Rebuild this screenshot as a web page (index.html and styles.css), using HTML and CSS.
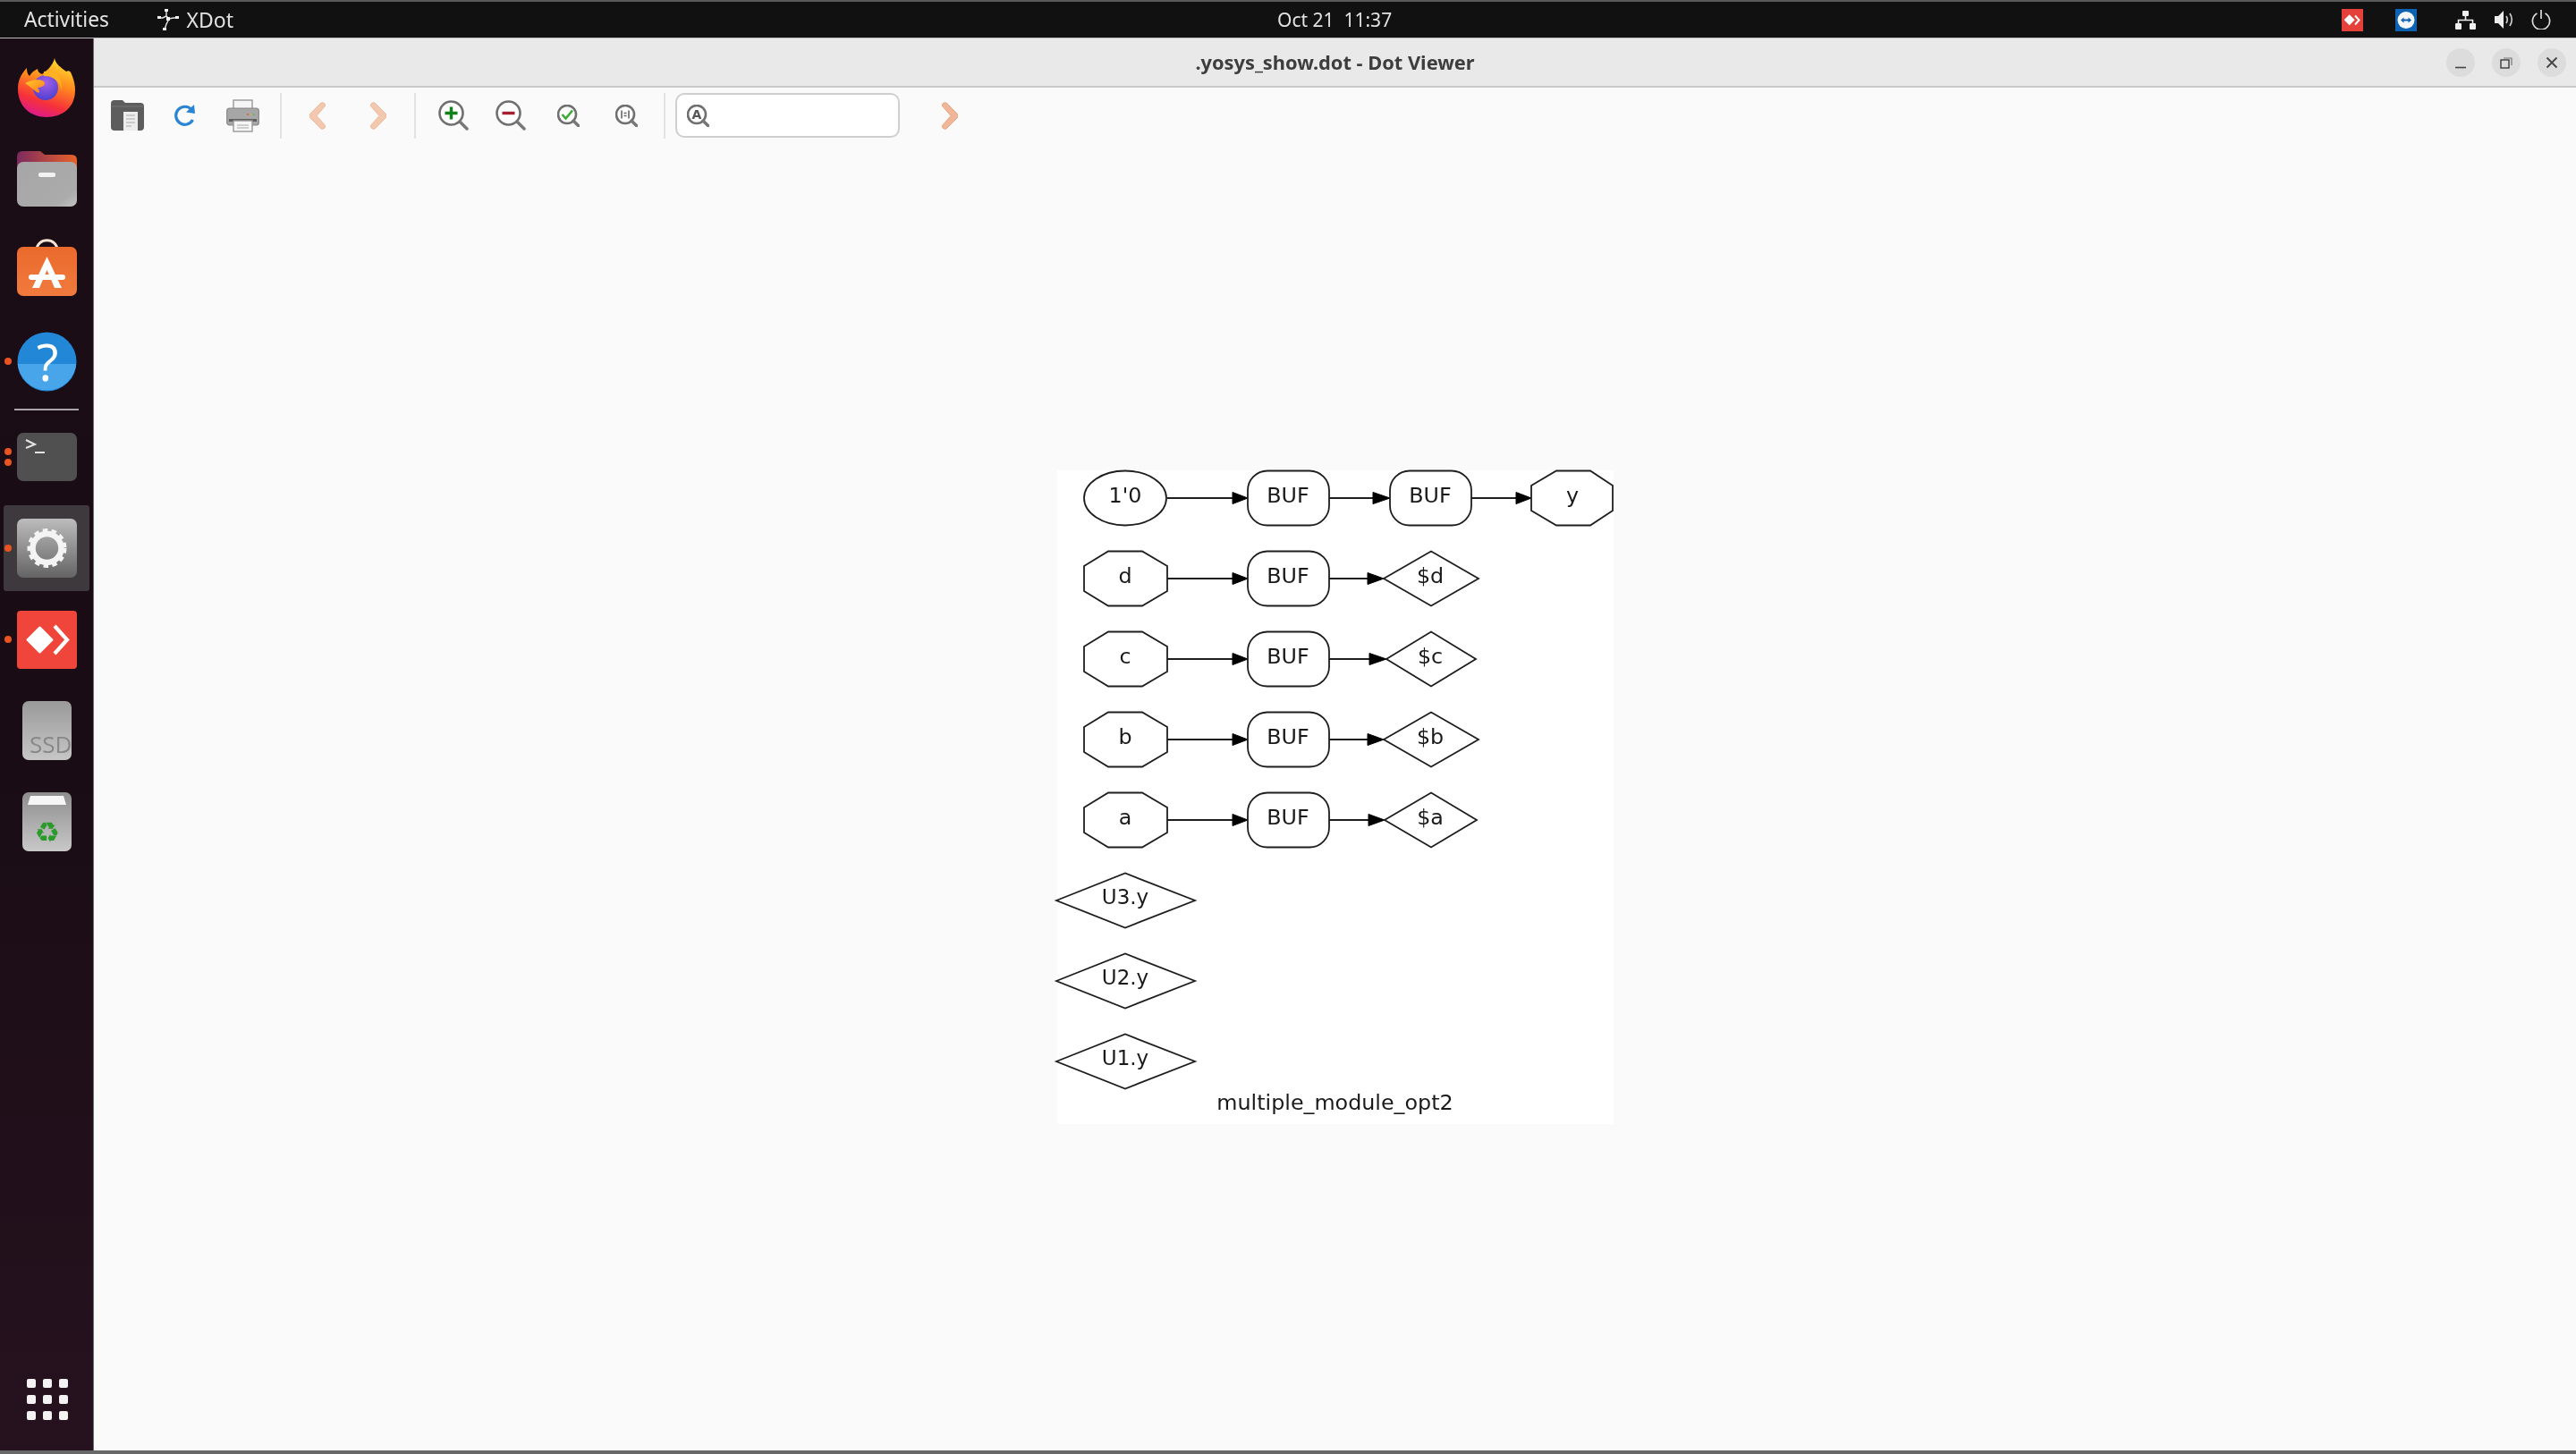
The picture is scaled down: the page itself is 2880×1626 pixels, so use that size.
FILE: index.html
```html
<!DOCTYPE html>
<html lang="en">
<head>
<meta charset="utf-8">
<title>.yosys_show.dot - Dot Viewer</title>
<link rel="stylesheet" href="styles.css">
</head>
<body>
<div class="desktop">
  <header class="topbar">
    <div class="top-left">
      <span class="top-text top-lead">Activities</span>
      <span class="app-menu">
        <svg class="xdot-icon" width="26" height="26" viewBox="0 0 26 26"><path d="M11 3 L11 9 L7 11 L1 11 M11 9 L14 12 L19 11 L25 11 M14 12 L11 18 L9 24" fill="none" stroke="#e8e8e8" stroke-width="1.4"/><g fill="#f2f2f2"><rect x="9" y="1" width="4" height="3"/><rect x="1" y="9" width="4" height="3"/><rect x="11" y="10" width="4" height="4"/><rect x="21" y="9" width="4" height="3"/><rect x="7" y="22" width="4" height="3"/></g></svg>
        <span class="top-text top-app">XDot</span>
      </span>
    </div>
    <div class="top-text clock">Oct 21&nbsp; 11:37</div>
    <div class="tray">
      <svg class="tray-badge" width="24" height="25" viewBox="0 0 24 25"><rect width="24" height="25" fill="#e5403a"/><rect x="4.5" y="8" width="8.5" height="8.5" transform="rotate(45 8.7 12.2)" fill="#fff"/><path d="M15 7.5 L19.5 12.5 L15 17.5" fill="none" stroke="#fff" stroke-width="2"/></svg>
      <svg class="tray-badge tv" width="24" height="25" viewBox="0 0 24 25"><rect width="24" height="25" fill="#0e62b4"/><circle cx="12" cy="12.5" r="9.5" fill="#f4f8fc"/><path d="M6 12.5 L9.5 9.5 V11.5 H14.5 V9.5 L18 12.5 L14.5 15.5 V13.5 H9.5 V15.5 Z" fill="#0e62b4"/></svg>
      <svg class="tray-net" width="23" height="21" viewBox="0 0 23 21"><g fill="#f0f0f0"><rect x="8" y="0" width="7" height="6" rx="1"/><rect x="0" y="14" width="7" height="7" rx="1"/><rect x="16" y="14" width="7" height="7" rx="1"/></g><path d="M11.5 6 V10.5 M3.5 14 V10.5 H19.5 V14" fill="none" stroke="#f0f0f0" stroke-width="1.6"/></svg>
      <svg class="tray-vol" width="22" height="20" viewBox="0 0 22 20"><path d="M0 6 H4 L10 0 V20 L4 14 H0 Z" fill="#ececec"/><path d="M13 6 Q15.5 10 13 14 M17 3 Q21.5 10 17 17" fill="none" stroke="#c8c8c8" stroke-width="1.7"/></svg>
      <svg class="tray-power" width="22" height="22" viewBox="0 0 22 22"><path d="M6.5 4 A9.6 9.6 0 1 0 15.5 4" fill="none" stroke="#dcdcdc" stroke-width="1.7"/><path d="M11 0 V10" stroke="#dcdcdc" stroke-width="1.7"/></svg>
    </div>
  </header>

  <div class="workspace">
    <nav class="dock">
      <div class="slot">
        <svg width="66" height="66" viewBox="0 0 66 66">
          <defs>
            <linearGradient id="ffa" x1="0.7" y1="0" x2="0.35" y2="1"><stop offset="0" stop-color="#ffe02e"/><stop offset="0.4" stop-color="#ff8a1e"/><stop offset="0.75" stop-color="#f6303a"/><stop offset="1" stop-color="#dc1a8e"/></linearGradient>
            <radialGradient id="ffb" cx="0.5" cy="0.3" r="0.7"><stop offset="0" stop-color="#a55fe6"/><stop offset="1" stop-color="#4d40d2"/></radialGradient>
            <linearGradient id="ffc" x1="0" y1="0" x2="1" y2="1"><stop offset="0" stop-color="#ffc82a"/><stop offset="1" stop-color="#ff7a1c"/></linearGradient>
          </defs>
          <path d="M42 0 C43 7 50 11 55 15 C58 13 60 15 61 18 C64 25 65 31 65 36 C65 55 51 66 33 66 C15 66 1 54 1 34 C1 26 4 18 11 11 C11 16 12 18 14 20 C17 15 21 13 23 12 C23 15 25 17 28 18 C33 14 40 9 42 0 Z" fill="url(#ffa)"/>
          <circle cx="32" cy="33" r="14" fill="url(#ffb)"/>
          <path d="M9 28 C16 24 26 23 30 26 C33 29 29 33 23 33 C26 37 26 40 22 38 C18 35 14 31 9 28 Z" fill="url(#ffc)"/>
          <path d="M30 15 C42 12 51 20 50 36 C48 26 41 20 30 20 Z" fill="#ffb21f"/>
        </svg>
      </div>
      <div class="slot">
        <svg width="67" height="62" viewBox="0 0 67 62">
          <defs>
            <linearGradient id="fa" x1="0" y1="0" x2="1" y2="0"><stop offset="0" stop-color="#7c2a5e"/><stop offset="1" stop-color="#e8622a"/></linearGradient>
            <linearGradient id="fb" x1="0" y1="0" x2="1" y2="1"><stop offset="0" stop-color="#a6a6a6"/><stop offset="0.8" stop-color="#ababab"/><stop offset="1" stop-color="#c2c2c2"/></linearGradient>
          </defs>
          <path d="M0 6 Q0 0 6 0 H26 L31 4 H61 Q67 4 67 10 V30 H0 Z" fill="url(#fa)"/>
          <rect y="12" width="67" height="50" rx="7" fill="url(#fb)"/>
          <rect x="24" y="24" width="19" height="5" rx="2" fill="#f2f2f2"/>
        </svg>
      </div>
      <div class="slot">
        <svg width="67" height="69" viewBox="0 0 67 69">
          <defs><linearGradient id="sa" x1="0" y1="0" x2="0" y2="1"><stop offset="0" stop-color="#ea6a2c"/><stop offset="1" stop-color="#f17a3e"/></linearGradient></defs>
          <path d="M22 12 C22 -3 45 -3 45 12" fill="none" stroke="#f6e3d5" stroke-width="3"/>
          <rect y="8" width="67" height="55" rx="7" fill="url(#sa)"/>
          <path d="M33.5 19 L50 54 H42 L33.5 34 L25 54 H17 Z" fill="#fff"/>
          <rect x="13" y="39" width="41" height="6" rx="3" fill="#fff"/>
        </svg>
      </div>
      <div class="slot has-dot">
        <span class="dot dot-mid"></span>
        <svg width="67" height="67" viewBox="0 0 67 67">
          <circle cx="33.5" cy="33.5" r="33" fill="#2387d8"/>
          <path d="M0.7 36 H66.3 A33 33 0 0 1 0.7 36 Z" fill="#48a5ea"/>
          <text class="help-mark" x="34" y="55" text-anchor="middle">?</text>
        </svg>
      </div>
      <div class="dock-sep"></div>
      <div class="slot has-dot">
        <span class="dot dot-upper"></span>
        <span class="dot dot-lower"></span>
        <svg width="67" height="54" viewBox="0 0 67 54">
          <rect width="67" height="54" rx="7" fill="#505050"/>
          <path d="M10 8 L20 13 L10 17" fill="none" stroke="#e4e4e4" stroke-width="2"/>
          <path d="M20 22 H31" stroke="#e4e4e4" stroke-width="2"/>
        </svg>
      </div>
      <div class="slot slot-active has-dot">
        <span class="dot dot-mid"></span>
        <svg width="67" height="66" viewBox="0 0 67 66">
          <defs><linearGradient id="ga" x1="0" y1="0" x2="0" y2="1"><stop offset="0" stop-color="#bcbcbc"/><stop offset="1" stop-color="#646464"/></linearGradient></defs>
          <rect width="67" height="66" rx="7" fill="url(#ga)"/>
          <circle cx="33.5" cy="33" r="16" fill="none" stroke="#f4f4f4" stroke-width="6.5"/>
          <circle cx="33.5" cy="33" r="19.5" fill="none" stroke="#f4f4f4" stroke-width="5" stroke-dasharray="5.4 4.23"/>
        </svg>
      </div>
      <div class="slot has-dot">
        <span class="dot dot-mid"></span>
        <svg width="67" height="65" viewBox="0 0 67 65">
          <rect width="67" height="65" rx="4" fill="#f0453a"/>
          <rect x="14.5" y="21.5" width="22" height="22" rx="1.5" transform="rotate(45 25.5 32.5)" fill="#fff"/>
          <path d="M42 17 L56 32.5 L42 48" fill="none" stroke="#fff" stroke-width="4.2"/>
        </svg>
      </div>
      <div class="slot">
        <svg width="55" height="66" viewBox="0 0 55 66">
          <defs><linearGradient id="da" x1="0" y1="0" x2="0" y2="1"><stop offset="0" stop-color="#9a9a9a"/><stop offset="1" stop-color="#c6c6c6"/></linearGradient></defs>
          <rect width="55" height="66" rx="7" fill="url(#da)"/>
          <text class="ssd-label" x="8" y="58">SSD</text>
        </svg>
      </div>
      <div class="slot">
        <svg width="55" height="66" viewBox="0 0 55 66">
          <defs><linearGradient id="ta" x1="0" y1="0" x2="0" y2="1"><stop offset="0" stop-color="#8e8e8e"/><stop offset="1" stop-color="#c8c8c8"/></linearGradient></defs>
          <rect width="55" height="66" rx="7" fill="url(#ta)"/>
          <path d="M6 14 L9 4 H46 L49 14 Z" fill="#f6f6f6"/>
          <text class="recycle" x="27.5" y="56" text-anchor="middle">♻</text>
        </svg>
      </div>
      <div class="apps-grid">
        <i></i><i></i><i></i><i></i><i></i><i></i><i></i><i></i><i></i>
      </div>
    </nav>

    <main class="window">
      <div class="titlebar">
        <div class="title">.yosys_show.dot - Dot Viewer</div>
        <div class="win-buttons">
          <span class="win-btn"><svg width="14" height="14" viewBox="0 0 14 14"><path d="M1 12.5 H13" stroke="#444" stroke-width="1.6"/></svg></span>
          <span class="win-btn"><svg width="14" height="14" viewBox="0 0 14 14"><rect x="1" y="4" width="9" height="9" fill="none" stroke="#444" stroke-width="1.5"/><path d="M4 2 H13 V10" fill="none" stroke="#777" stroke-width="1.2"/></svg></span>
          <span class="win-btn"><svg width="14" height="14" viewBox="0 0 14 14"><path d="M1.5 1.5 L12.5 12.5 M12.5 1.5 L1.5 12.5" stroke="#444" stroke-width="1.8"/></svg></span>
        </div>
      </div>

      <div class="toolbar">
        <button class="tool">
          <svg width="37" height="36" viewBox="0 0 37 36"><path d="M0 5 Q0 1 4 1 H13 L16 4 H33 Q37 4 37 8 V31 Q37 35 33 35 H4 Q0 35 0 31 Z" fill="#5d5d5d"/><path d="M1 8 H36" stroke="#777" stroke-width="1"/><path d="M14 14 H30 V35 H14 Z" fill="#ededed"/><path d="M17 18 H27 M17 22 H27 M17 26 H27 M17 30 H23" stroke="#aaa" stroke-width="1.2"/></svg>
        </button>
        <button class="tool">
          <svg width="25" height="24" viewBox="0 0 25 24"><path d="M20.5 6 A10 10 0 1 0 21.5 17" fill="none" stroke="#2a84d4" stroke-width="3.2"/><path d="M14 8.5 L24 10 L23 0 Z" fill="#2a84d4"/></svg>
        </button>
        <button class="tool">
          <svg width="37" height="37" viewBox="0 0 37 37"><rect x="8" y="1" width="21" height="14" fill="#f6f6f6" stroke="#999" stroke-width="1.4"/><rect x="0.7" y="10" width="35.6" height="19" rx="3" fill="#a6a6a6" stroke="#888" stroke-width="1.2"/><rect x="3" y="22" width="31" height="3" fill="#5e5e5e"/><circle cx="24" cy="17" r="1" fill="#d55"/><circle cx="27.5" cy="17" r="1" fill="#d9a33c"/><circle cx="31" cy="17" r="1" fill="#6a6"/><rect x="8" y="24" width="21" height="12" fill="#f6f6f6" stroke="#999" stroke-width="1.4"/><path d="M12 29 H25 M12 32 H25" stroke="#aaa" stroke-width="1"/></svg>
        </button>
        <span class="tool-sep"></span>
        <button class="tool tool-nav tool-back">
          <svg width="18" height="31" viewBox="0 0 18 31"><path class="chev" d="M13 1 Q15 0 17 2 L18 4 L8 15.5 L18 27 L17 29 Q15 31 13 30 L1 18 Q-1 15.5 1 13 Z"/></svg>
        </button>
        <button class="tool tool-nav">
          <svg width="18" height="31" viewBox="0 0 18 31"><path class="chev" d="M5 1 Q3 0 1 2 L0 4 L10 15.5 L0 27 L1 29 Q3 31 5 30 L17 18 Q19 15.5 17 13 Z"/></svg>
        </button>
        <span class="tool-sep sep-zoom"></span>
        <button class="tool">
          <svg width="34" height="34" viewBox="0 0 34 34"><circle class="lens-glass" cx="14.5" cy="14.5" r="13"/><circle class="lens" cx="14.5" cy="14.5" r="13"/><path class="lens-handle" d="M24 24 L32 32"/><path d="M7.5 14.5 H21.5 M14.5 7.5 V21.5" stroke="#11811a" stroke-width="3.4"/></svg>
        </button>
        <button class="tool">
          <svg width="34" height="34" viewBox="0 0 34 34"><circle class="lens-glass" cx="14.5" cy="14.5" r="13"/><circle class="lens" cx="14.5" cy="14.5" r="13"/><path class="lens-handle" d="M24 24 L32 32"/><path d="M7.5 14.5 H21.5" stroke="#a5202f" stroke-width="3.4"/></svg>
        </button>
        <button class="tool">
          <svg width="25" height="25" viewBox="0 0 25 25"><circle class="lens-glass" cx="11" cy="11" r="10"/><circle class="lens" cx="11" cy="11" r="10"/><path class="lens-handle" d="M18 18 L24 24"/><path d="M5.5 11 L9.5 15.5 L17 6.5" fill="none" stroke="#3bab34" stroke-width="2.6"/></svg>
        </button>
        <button class="tool">
          <svg width="25" height="25" viewBox="0 0 25 25"><circle class="lens-glass" cx="11" cy="11" r="10"/><circle class="lens" cx="11" cy="11" r="10"/><path class="lens-handle" d="M18 18 L24 24"/><path d="M7 6.5 V15.5 M15 6.5 V15.5 M9.5 9.5 H12.5 M9.5 12.5 H12.5" stroke="#666" stroke-width="1.6"/></svg>
        </button>
        <span class="tool-sep sep-find"></span>
        <div class="search">
          <svg width="25" height="25" viewBox="0 0 25 25"><circle class="lens-glass" cx="11" cy="11" r="10"/><circle class="lens" cx="11" cy="11" r="10"/><path class="lens-handle" d="M18 18 L24 24"/><text class="lens-a" x="11" y="15.5" text-anchor="middle">A</text></svg>
        </div>
        <button class="tool tool-next">
          <svg width="18" height="31" viewBox="0 0 18 31"><path class="chev chev-strong" d="M5 1 Q3 0 1 2 L0 4 L10 15.5 L0 27 L1 29 Q3 31 5 30 L17 18 Q19 15.5 17 13 Z"/></svg>
        </button>
      </div>

      <div class="canvas">
        <svg class="graph" width="622" height="731" viewBox="1182 526 622 731">
          <defs>
            <polygon id="oct" points="1212,-14 1239,-30.5 1277,-30.5 1305,-14 1305,14 1277,30.5 1239,30.5 1212,14"/>
            <rect id="buf" x="1395" y="-30.5" width="91" height="61" rx="22"/>
            <g id="in-arrow"><path d="M1305 0 H1378"/><polygon class="head" points="1378,-6.5 1395,0 1378,6.5"/></g>
          </defs>
          <rect class="sheet" x="1182" y="526" width="622" height="731"/>

          <g transform="translate(0 557)">
            <ellipse cx="1258" cy="0" rx="46" ry="30.5"/>
            <use href="#in-arrow"/>
            <use href="#buf"/>
            <path d="M1486 0 H1535"/><polygon class="head" points="1535,-6.5 1554,0 1535,6.5"/>
            <rect x="1554" y="-30.5" width="91" height="61" rx="22"/>
            <path d="M1645 0 H1695"/><polygon class="head" points="1695,-6.5 1712,0 1695,6.5"/>
            <polygon points="1712,-14 1740,-30.5 1778,-30.5 1803,-14 1803,14 1778,30.5 1740,30.5 1712,14"/>
            <text x="1258" y="4.5">1'0</text><text x="1440" y="4.5">BUF</text><text x="1599" y="4.5">BUF</text><text x="1758" y="4.5">y</text>
          </g>
          <g transform="translate(0 647)">
            <use href="#oct"/><use href="#in-arrow"/><use href="#buf"/>
            <path d="M1486 0 H1529"/><polygon class="head" points="1529,-6.5 1547,0 1529,6.5"/>
            <polygon points="1547,0 1600,-30.5 1653,0 1600,30.5"/>
            <text x="1258" y="4.5">d</text><text x="1440" y="4.5">BUF</text><text x="1599" y="4.5">$d</text>
          </g>
          <g transform="translate(0 737)">
            <use href="#oct"/><use href="#in-arrow"/><use href="#buf"/>
            <path d="M1486 0 H1531"/><polygon class="head" points="1531,-6.5 1550,0 1531,6.5"/>
            <polygon points="1550,0 1600,-30.5 1650,0 1600,30.5"/>
            <text x="1258" y="4.5">c</text><text x="1440" y="4.5">BUF</text><text x="1599" y="4.5">$c</text>
          </g>
          <g transform="translate(0 827)">
            <use href="#oct"/><use href="#in-arrow"/><use href="#buf"/>
            <path d="M1486 0 H1529"/><polygon class="head" points="1529,-6.5 1547,0 1529,6.5"/>
            <polygon points="1547,0 1600,-30.5 1653,0 1600,30.5"/>
            <text x="1258" y="4.5">b</text><text x="1440" y="4.5">BUF</text><text x="1599" y="4.5">$b</text>
          </g>
          <g transform="translate(0 917)">
            <use href="#oct"/><use href="#in-arrow"/><use href="#buf"/>
            <path d="M1486 0 H1530"/><polygon class="head" points="1530,-6.5 1548,0 1530,6.5"/>
            <polygon points="1548,0 1600,-30.5 1651,0 1600,30.5"/>
            <text x="1258" y="4.5">a</text><text x="1440" y="4.5">BUF</text><text x="1599" y="4.5">$a</text>
          </g>
          <g transform="translate(0 1007)">
            <polygon points="1181,0 1258,-30.5 1336,0 1258,30.5"/>
            <text class="label-narrow" x="1258" y="3.5">U3.y</text>
          </g>
          <g transform="translate(0 1097)">
            <polygon points="1181,0 1258,-30.5 1336,0 1258,30.5"/>
            <text class="label-narrow" x="1258" y="3.5">U2.y</text>
          </g>
          <g transform="translate(0 1187)">
            <polygon points="1181,0 1258,-30.5 1336,0 1258,30.5"/>
            <text class="label-narrow" x="1258" y="3.5">U1.y</text>
          </g>
          <text x="1492.5" y="1241">multiple_module_opt2</text>
        </svg>
      </div>
    </main>
  </div>
  <div class="bottom-edge"></div>
</div>
</body>
</html>
```

FILE: styles.css
```css
* { box-sizing: border-box; }
html, body { margin: 0; padding: 0; }
body { width: 2880px; height: 1626px; overflow: hidden; background: #111; }

.desktop {
  width: 2880px;
  height: 1626px;
  display: flex;
  flex-direction: column;
  filter: blur(0.5px);
  font-family: "Noto Sans", "Open Sans", sans-serif;
}

/* top bar */
.topbar {
  height: 43px;
  flex: none;
  display: grid;
  grid-template-columns: 1428px auto 1fr;
  align-items: center;
  background: #111;
  border-top: 2px solid #5a5a5a;
  border-bottom: 1px solid #bdbdbd;
}
.top-text { color: #e2e2e2; font-size: 21px; line-height: 1; }
.top-lead { font-size: 22.8px; }
.top-app { font-size: 23px; }
.top-left { display: flex; align-items: center; padding-left: 27px; }
.app-menu { display: flex; align-items: center; gap: 7px; margin-left: 53.5px; }
.tray { display: flex; align-items: center; justify-content: flex-end; padding-right: 28px; }
.tray-badge { margin-right: 36px; }
.tray-badge.tv { margin-right: 43px; }
.tray-net { margin-right: 21px; }
.tray-vol { margin-right: 19px; }

/* workspace */
.workspace { flex: 1; min-height: 0; display: flex; }

/* dock */
.dock {
  width: 105px;
  flex: none;
  display: flex;
  flex-direction: column;
  padding: 4px 0 34px 4px;
  background: linear-gradient(180deg, #1a0d15 0%, #190c14 50%, #26121f 100%);
  border-right: 1px solid #6f6a6e;
}
.slot {
  position: relative;
  width: 96px;
  height: 102px;
  flex: none;
  display: flex;
  align-items: center;
  justify-content: center;
}
.slot svg { position: relative; overflow: visible; }
.slot-active::before {
  content: "";
  position: absolute;
  left: 0; right: 0; top: 3px; bottom: 3px;
  background: #3e393d;
  border-radius: 3px;
}
.dot {
  position: absolute;
  left: 1px;
  width: 8px;
  height: 8px;
  border-radius: 50%;
  background: #e95420;
}
.dot-mid { top: 47px; }
.dot-upper { top: 41px; }
.dot-lower { top: 53px; }
.dock-sep {
  height: 5px;
  flex: none;
  display: flex;
  align-items: center;
  margin-left: 12px;
  width: 72px;
}
.dock-sep::after { content: ""; display: block; width: 100%; height: 2px; background: #aaa5a8; }
.help-mark { font-family: "Open Sans", sans-serif; font-size: 57px; fill: #fff; }
.ssd-label { font-family: "Open Sans", sans-serif; font-size: 26px; fill: #888; }
.recycle { font-family: "DejaVu Sans", sans-serif; font-size: 32px; fill: #2a9a2a; }
.apps-grid {
  margin-top: auto;
  margin-left: 26px;
  display: grid;
  grid-template-columns: repeat(3, 10px);
  grid-auto-rows: 10px;
  gap: 8px;
}
.apps-grid i { background: #f4f2f3; border-radius: 2px; }

/* window */
.window { flex: 1; min-width: 0; display: flex; flex-direction: column; background: #fafafa; }
.titlebar {
  height: 55px;
  flex: none;
  display: grid;
  grid-template-columns: 1fr auto 1fr;
  align-items: center;
  background: #e9e9e9;
  border-bottom: 2px solid #c9c9c9;
}
.title {
  grid-column: 2;
  font-size: 21.8px;
  font-weight: 700;
  color: #3d3d3d;
  line-height: 1;
  padding-top: 1px;
}
.win-buttons {
  grid-column: 3;
  display: flex;
  justify-content: flex-end;
  gap: 19px;
  padding-right: 11px;
}
.win-btn {
  width: 32px;
  height: 32px;
  border-radius: 50%;
  background: #dcdcdc;
  display: flex;
  align-items: center;
  justify-content: center;
}

/* toolbar */
.toolbar {
  height: 62px;
  flex: none;
  display: flex;
  align-items: center;
  padding-left: 5px;
}
.tool {
  width: 64.5px;
  height: 52px;
  flex: none;
  padding: 0;
  border: 0;
  background: none;
  display: flex;
  align-items: center;
  justify-content: center;
}
.tool-nav { width: 68.5px; }
.tool-back { margin-left: -3px; }
.tool-next { margin-left: 24px; }
.tool-sep { width: 20px; height: 51px; flex: none; display: flex; justify-content: center; }
.tool-sep::after { content: ""; width: 2px; height: 100%; background: #e2e2e2; }
.sep-zoom { width: 13px; margin-right: 4px; }
.sep-find { width: 21px; }
.chev { fill: #f2c8ae; stroke: #edb79a; stroke-width: 1; }
.chev-strong { fill: #efb698; stroke: #e9a584; }
.lens-glass { fill: #fdfdfd; }
.lens { fill: none; stroke: #6f6f6f; stroke-width: 2.6; }
.lens-handle { fill: none; stroke: #777; stroke-width: 3.4; stroke-linecap: round; }
.lens-a { font-family: "DejaVu Sans", sans-serif; font-size: 14px; font-weight: 700; fill: #555; }
.search {
  width: 251px;
  height: 50px;
  flex: none;
  margin-left: 1.5px;
  display: flex;
  align-items: center;
  padding-left: 11px;
  background: #fff;
  border: 2px solid #cfcfcf;
  border-radius: 10px;
}

/* graph */
.canvas { flex: 1; min-height: 0; display: flex; align-items: center; justify-content: center; }
.graph { overflow: visible; display: block; }
.sheet { fill: #fff; }
.graph polygon, .graph rect:not(.sheet), .graph ellipse, .graph path {
  fill: none;
  stroke: #1e1e1e;
  stroke-width: 1.8;
}
.graph .head { fill: #000; stroke: #000; stroke-width: 1; }
.graph text {
  font-family: "DejaVu Sans", sans-serif;
  font-size: 23.8px;
  fill: #1a1a1a;
  text-anchor: middle;
}
.graph .label-narrow { font-size: 23px; }

.bottom-edge { height: 4px; flex: none; background: #686868; }
```
